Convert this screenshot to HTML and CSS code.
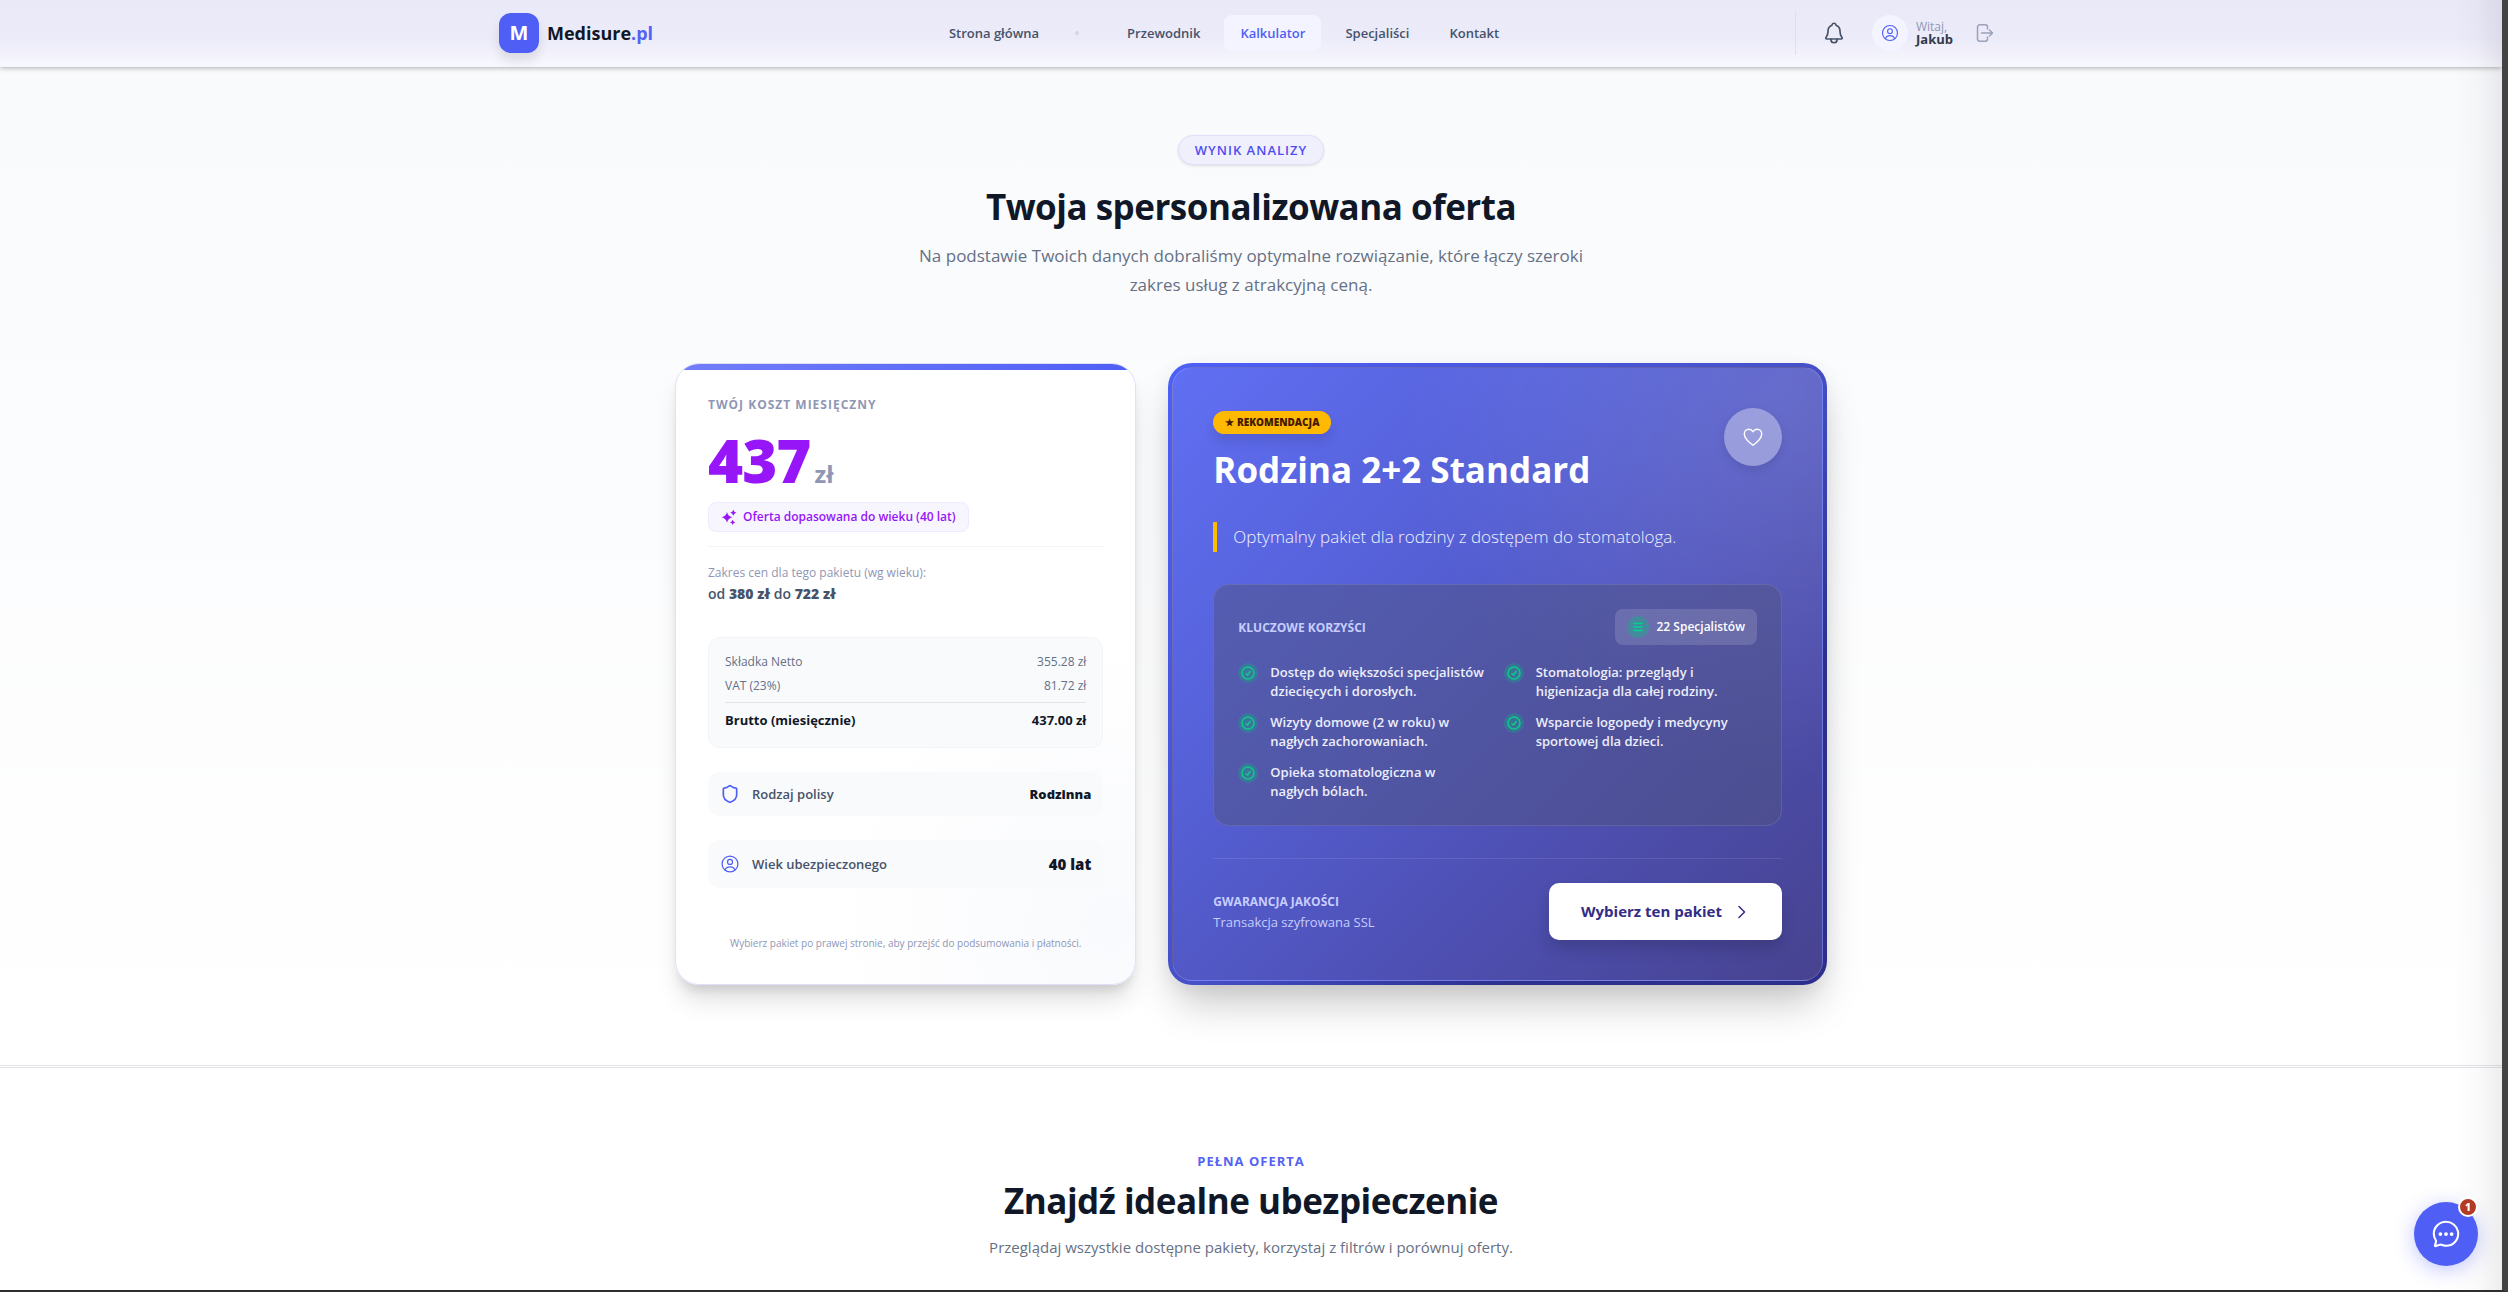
FILE: index.html
```html
<!DOCTYPE html>
<html lang="pl">
<head>
    <meta charset="UTF-8">
    <meta name="viewport" content="width=device-width, initial-scale=1.0">
    <title>Medisure.pl - Kalkulator</title>
    <link rel="stylesheet" href="styles.css">
</head>
<body>
    <header class="header">
        <div class="header-inner">
            <a href="#" class="logo">
                <span class="logo-mark">M</span>
                <span class="logo-text">Medisure<span class="accent">.pl</span></span>
            </a>

            <nav class="nav">
                <a href="#" class="nav-link">Strona główna</a>
                <span class="nav-dot"></span>
                <a href="#" class="nav-link">Przewodnik</a>
                <a href="#" class="nav-link active">Kalkulator</a>
                <a href="#" class="nav-link">Specjaliści</a>
                <a href="#" class="nav-link">Kontakt</a>
            </nav>

            <div class="user-area">
                <button class="icon-btn bell" aria-label="Powiadomienia">
                    <svg viewBox="0 0 512 512" class="icon icon-24">
                        <path d="M427.68 351.43C402 320 383.87 304 383.87 217.35 383.87 138 343.35 109.73 310 96c-4.43-1.82-8.6-6-9.95-10.55C294.2 65.54 277.8 48 256 48s-38.21 17.55-44 37.47c-1.35 4.6-5.52 8.71-9.95 10.53-33.39 13.75-73.87 41.92-73.87 121.35C128.13 304 110 320 84.32 351.43 73.68 364.45 83 384 101.61 384h308.88c18.51 0 27.77-19.61 17.19-32.57z"/>
                        <path d="M320 384v16a64 64 0 01-128 0v-16"/>
                    </svg>
                </button>
                <a href="#" class="user">
                    <span class="avatar">
                        <svg viewBox="0 0 24 24" class="icon icon-18 thin">
                            <circle cx="12" cy="12" r="10"/>
                            <circle cx="12" cy="9.5" r="3.2"/>
                            <path d="M6 19.6c.6-2.6 3-4.1 6-4.1s5.4 1.5 6 4.1"/>
                        </svg>
                    </span>
                    <span class="user-text">
                        <span class="hello">Witaj,</span>
                        <strong>Jakub</strong>
                    </span>
                </a>
                <button class="icon-btn logout" aria-label="Wyloguj">
                    <svg viewBox="0 0 20 20" class="icon icon-20 thin">
                        <path d="M12.5 6V4a2.2 2.2 0 0 0-2.2-2.2H4.7A2.2 2.2 0 0 0 2.5 4v12a2.2 2.2 0 0 0 2.2 2.2h5.6a2.2 2.2 0 0 0 2.2-2.2v-2M14.5 7l3 3-3 3M6.5 10h11"/>
                    </svg>
                </button>
            </div>
        </div>
    </header>

    <main>
        <section class="result">
            <div class="intro">
                <span class="pill">WYNIK ANALIZY</span>
                <h1>Twoja spersonalizowana oferta</h1>
                <p>Na podstawie Twoich danych dobraliśmy optymalne rozwiązanie, które łączy szeroki zakres usług z atrakcyjną ceną.</p>
            </div>

            <div class="cards">
                <!-- Koszt -->
                <div class="cost-card">
                    <h2 class="cost-label">TWÓJ KOSZT MIESIĘCZNY</h2>
                    <div class="price"><span class="amount">437</span><span class="currency">zł</span></div>
                    <div class="age-badge">
                        <svg viewBox="0 0 24 24" class="sparkles">
                            <path d="M9 4.5q1.3 6.2 8 8-6.7 1.8-8 8-1.3-6.2-8-8 6.7-1.8 8-8zM18.5 1q.9 3.6 4.5 4.5-3.6.9-4.5 4.5-.9-3.6-4.5-4.5 3.6-.9 4.5-4.5zM17.5 16q.7 3.3 4 4-3.3.7-4 4-.7-3.3-4-4 3.3-.7 4-4z"/>
                        </svg>
                        Oferta dopasowana do wieku (40 lat)
                    </div>
                    <div class="range">
                        <p class="range-label">Zakres cen dla tego pakietu (wg wieku):</p>
                        <p class="range-value">od <strong>380 zł</strong> do <strong>722 zł</strong></p>
                    </div>
                    <dl class="breakdown">
                        <div><dt>Składka Netto</dt><dd>355.28 zł</dd></div>
                        <div><dt>VAT (23%)</dt><dd>81.72 zł</dd></div>
                        <div class="total"><dt>Brutto (miesięcznie)</dt><dd>437.00 zł</dd></div>
                    </dl>
                    <div class="detail">
                        <svg viewBox="0 0 24 24" class="icon icon-20">
                            <path d="M20 13c0 5-3.5 7.5-7.66 8.95a1 1 0 0 1-.67-.01C7.5 20.5 4 18 4 13V6a1 1 0 0 1 1-1c2 0 4.5-1.2 6.24-2.72a1.17 1.17 0 0 1 1.52 0C14.51 3.81 17 5 19 5a1 1 0 0 1 1 1z"/>
                        </svg>
                        <span>Rodzaj polisy</span>
                        <strong>Rodzinna</strong>
                    </div>
                    <div class="detail age">
                        <svg viewBox="0 0 24 24" class="icon icon-20 thin">
                            <circle cx="12" cy="12" r="9.5"/>
                            <circle cx="12" cy="9.5" r="3"/>
                            <path d="M6.2 19.3c.6-2.5 3-3.8 5.8-3.8s5.2 1.3 5.8 3.8"/>
                        </svg>
                        <span>Wiek ubezpieczonego</span>
                        <strong>40 lat</strong>
                    </div>
                    <p class="note">Wybierz pakiet po prawej stronie, aby przejść do podsumowania i płatności.</p>
                </div>

                <!-- Rekomendacja -->
                <div class="offer-card">
                    <div class="offer-inner">
                        <div class="offer-head">
                            <div>
                                <span class="recommend">★ REKOMENDACJA</span>
                                <h2>Rodzina 2+2 Standard</h2>
                            </div>
                            <button class="heart" aria-label="Dodaj do ulubionych">
                                <svg viewBox="0 0 24 24" class="icon icon-22 thin">
                                    <path d="M12 21C7 17.5 2.5 13.5 2.5 8.8 2.5 5.7 4.8 3.5 7.5 3.5c1.9 0 3.5 1 4.5 2.8 1-1.8 2.6-2.8 4.5-2.8 2.7 0 5 2.2 5 5.3C21.5 13.5 17 17.5 12 21z"/>
                                </svg>
                            </button>
                        </div>
                        <p class="quote">Optymalny pakiet dla rodziny z dostępem do stomatologa.</p>

                        <div class="benefits">
                            <div class="benefits-head">
                                <h3>KLUCZOWE KORZYŚCI</h3>
                                <span class="specialists">
                                    <span class="list-icon">
                                        <svg viewBox="0 0 10 10" class="icon icon-10 thin"><path d="M1 1.5h8M1 5h8M1 8.5h8"/></svg>
                                    </span>
                                    22 Specjalistów
                                </span>
                            </div>
                            <ul>
                                <li>
                                    <svg viewBox="0 0 20 20" class="check"><circle class="halo" cx="10" cy="10" r="10"/><circle cx="10" cy="10" r="6"/><path d="M7.5 10.5l2 1.5 3-4"/></svg>
                                    Dostęp do większości specjalistów dziecięcych i dorosłych.
                                </li>
                                <li>
                                    <svg viewBox="0 0 20 20" class="check"><circle class="halo" cx="10" cy="10" r="10"/><circle cx="10" cy="10" r="6"/><path d="M7.5 10.5l2 1.5 3-4"/></svg>
                                    Stomatologia: przeglądy i higienizacja dla całej rodziny.
                                </li>
                                <li>
                                    <svg viewBox="0 0 20 20" class="check"><circle class="halo" cx="10" cy="10" r="10"/><circle cx="10" cy="10" r="6"/><path d="M7.5 10.5l2 1.5 3-4"/></svg>
                                    Wizyty domowe (2 w roku) w nagłych zachorowaniach.
                                </li>
                                <li>
                                    <svg viewBox="0 0 20 20" class="check"><circle class="halo" cx="10" cy="10" r="10"/><circle cx="10" cy="10" r="6"/><path d="M7.5 10.5l2 1.5 3-4"/></svg>
                                    Wsparcie logopedy i medycyny sportowej dla dzieci.
                                </li>
                                <li>
                                    <svg viewBox="0 0 20 20" class="check"><circle class="halo" cx="10" cy="10" r="10"/><circle cx="10" cy="10" r="6"/><path d="M7.5 10.5l2 1.5 3-4"/></svg>
                                    <span>Opieka stomatologiczna w<br>nagłych bólach.</span>
                                </li>
                            </ul>
                        </div>

                        <div class="offer-footer">
                            <p><strong>GWARANCJA JAKOŚCI</strong><br>Transakcja szyfrowana SSL</p>
                            <button class="choose">
                                Wybierz ten pakiet
                                <svg viewBox="0 0 16 16" class="icon icon-16 thin"><path d="M5 2.5l5.5 5.5L5 13.5"/></svg>
                            </button>
                        </div>
                    </div>
                </div>
            </div>
        </section>

        <section class="catalog">
            <span class="eyebrow">PEŁNA OFERTA</span>
            <h2>Znajdź idealne ubezpieczenie</h2>
            <p>Przeglądaj wszystkie dostępne pakiety, korzystaj z filtrów i porównuj oferty.</p>
        </section>
    </main>

    <div class="edge-shade"></div>

    <button class="chat" aria-label="Czat">
        <svg viewBox="0 0 512 512" class="icon icon-30">
            <path d="M87.48 380c1.2-4.38-1.43-10.47-3.94-14.86a42.63 42.63 0 00-2.54-3.8 199.81 199.81 0 01-33-110C47.64 139.09 140.72 48 255.82 48 356.2 48 440 117.54 459.57 209.85a199 199 0 014.43 41.64c0 112.41-89.49 204.93-204.59 204.93-18.31 0-43-4.6-56.47-8.37s-26.92-8.77-30.39-10.11a31.14 31.14 0 00-11.13-2.07 30.7 30.7 0 00-12.08 2.43L81.5 462.78a15.92 15.92 0 01-4.66 1.22 9.61 9.61 0 01-9.58-9.74 15.85 15.85 0 01.6-3.29z"/>
            <g class="dots"><circle cx="160" cy="256" r="32"/><circle cx="256" cy="256" r="32"/><circle cx="352" cy="256" r="32"/></g>
        </svg>
        <span class="chat-count">1</span>
    </button>
</body>
</html>
```

FILE: styles.css
```css
* {
    box-sizing: border-box;
    margin: 0;
    padding: 0;
}

body {
    height: 100vh;
    overflow: hidden;
    display: flex;
    flex-direction: column;
    border-right: 6px solid #434343;
    border-bottom: 2px solid #2e2e2c;
    background: #fff;
    color: #101828;
    font-family: "Open Sans", "Noto Sans", sans-serif;
    font-size: 14px;
}

a {
    color: inherit;
    text-decoration: none;
}

button {
    border: none;
    background: none;
    font-family: inherit;
    cursor: pointer;
}

.icon {
    fill: none;
    stroke: currentColor;
    stroke-width: 2;
    stroke-linecap: round;
    stroke-linejoin: round;
    flex-shrink: 0;
}

.icon[viewBox="0 0 512 512"] { stroke-width: 36; }
.icon.thin { stroke-width: 1.5; }
.icon-10 { width: 10px; height: 10px; }
.icon-16 { width: 16px; height: 16px; }
.icon-18 { width: 18px; height: 18px; }
.icon-20 { width: 20px; height: 20px; }
.icon-22 { width: 22px; height: 22px; }
.icon-24 { width: 24px; height: 24px; }
.icon-30 { width: 30px; height: 30px; }

/* Header */
.header {
    flex-shrink: 0;
    position: relative;
    z-index: 1;
    border-bottom: 1px solid #f4f4fb;
    background: linear-gradient(#eae9f8 0%, #ecebf9 60%, #f8f8fe 100%);
    box-shadow: 0 1px 5px rgba(0, 0, 0, 0.3);
}

.header-inner {
    max-width: 1536px;
    height: 66px;
    margin: 0 auto;
    padding: 0 16px;
    display: flex;
    justify-content: space-between;
    align-items: center;
}

.logo {
    display: flex;
    align-items: center;
    gap: 8px;
}

.logo-mark {
    width: 40px;
    height: 40px;
    border-radius: 12px;
    background: #4f5ff5;
    box-shadow: 0 8px 12px rgba(0, 0, 0, 0.1);
    color: #fff;
    font-size: 20px;
    font-weight: 700;
    line-height: 40px;
    text-align: center;
}

.logo-text {
    font-size: 18px;
    font-weight: 700;
}

.accent {
    color: #5462f5;
}

.nav {
    display: flex;
    align-items: center;
    gap: 8px;
}

.nav-link {
    padding: 8px 16px;
    border-radius: 8px;
    color: #46536a;
    font-size: 13px;
    font-weight: 600;
    line-height: 20px;
}

.nav-link.active {
    background: #f3f4ff;
    color: #4f5ff5;
}

.nav-dot {
    width: 4px;
    height: 4px;
    margin: 0 24px 0 12px;
    border-radius: 50%;
    background: #d5d6e2;
}

.user-area {
    height: 44px;
    padding-left: 20px;
    border-left: 1px solid #dfe0ea;
    display: flex;
    align-items: center;
}

.icon-btn {
    display: flex;
    color: #46536a;
}

.bell {
    padding: 6px;
    margin-right: 20px;
}

.logout {
    padding: 8px;
    margin-left: 14px;
    color: #9aa1b8;
}

.user {
    display: flex;
    align-items: center;
    gap: 8px;
}

.avatar {
    width: 36px;
    height: 36px;
    border-radius: 50%;
    background: #f3f4ff;
    color: #4f5ff5;
    display: flex;
    align-items: center;
    justify-content: center;
}

.user-text {
    display: flex;
    flex-direction: column;
    font-size: 13px;
    line-height: 12px;
    color: #323a49;
}

.hello {
    color: #8f97b5;
    font-size: 12px;
}

/* Wynik analizy */
.result {
    padding: 68px 0 80px;
    background: linear-gradient(#f9fafc, #fff);
    border-bottom: 1px solid #e3e4e7;
}

.intro {
    max-width: 704px;
    margin: 0 auto 64px;
    padding: 0 16px;
    text-align: center;
}

.pill {
    display: inline-block;
    padding: 0 16px;
    border: 1px solid #dfe0fc;
    border-radius: 15px;
    background: #f0f0fd;
    box-shadow: 0 1px 3px rgba(0, 0, 0, 0.12);
    color: #4f4df0;
    font-size: 13px;
    font-weight: 600;
    letter-spacing: 1px;
    line-height: 28px;
}

h1,
.catalog h2,
.offer-head h2 {
    font-size: 35px;
    font-weight: 700;
    line-height: 44px;
}

h1,
.catalog h2 {
    letter-spacing: -0.5px;
}

h1 {
    margin: 20px 0 12px;
}

.intro p {
    color: #667085;
    font-size: 17px;
    line-height: 29px;
}

.cards {
    max-width: 1152px;
    margin: 0 auto;
    display: grid;
    grid-template-columns: repeat(12, 1fr);
    gap: 32px;
}

.cost-card {
    grid-column: span 5;
    position: relative;
    overflow: hidden;
    padding: 32px;
    border: 1px solid #dfe1fb;
    border-radius: 24px;
    background: radial-gradient(circle at 95% 90%, #f9fafd 0%, #fff 40%);
    box-shadow: 0 20px 25px -5px rgba(0, 0, 0, 0.12), 0 8px 12px -4px rgba(0, 0, 0, 0.12);
}

.cost-card::before {
    content: "";
    position: absolute;
    top: 0;
    left: 0;
    right: 0;
    height: 6px;
    background: linear-gradient(90deg, #727ef8, #4f5ff5);
}

.cost-label {
    color: #8f97b5;
    font-size: 12px;
    font-weight: 700;
    letter-spacing: 1px;
    line-height: 18px;
}

.price {
    display: flex;
    align-items: baseline;
    gap: 4px;
    margin-top: 16px;
    line-height: 60px;
}

.amount {
    color: #9716f7;
    font-size: 60px;
    font-weight: 800;
    letter-spacing: -1px;
}

.currency {
    color: #8f97b5;
    font-size: 24px;
    font-weight: 700;
    line-height: 24px;
}

.age-badge {
    display: inline-flex;
    align-items: center;
    gap: 6px;
    margin-top: 12px;
    padding: 0 12px;
    border: 1px solid #efeafd;
    border-radius: 8px;
    background: #f7f5fe;
    color: #9716f7;
    font-size: 12px;
    font-weight: 600;
    line-height: 28px;
}

.sparkles {
    width: 16px;
    height: 16px;
    fill: currentColor;
}

.range {
    margin: 14px 0 32px;
    padding-top: 16px;
    border-top: 1px solid #f1f3f7;
}

.range-label {
    color: #8f97b5;
    font-size: 12px;
    line-height: 20px;
}

.range-value {
    color: #46536a;
    font-size: 14px;
    font-weight: 600;
    line-height: 22px;
}

.breakdown {
    padding: 12px 16px;
    border: 1px solid #f2f4f7;
    border-radius: 12px;
    background: #f9fafc;
    color: #667085;
    font-size: 12px;
}

.breakdown div {
    display: flex;
    justify-content: space-between;
    line-height: 24px;
}

.breakdown .total {
    margin-top: 4px;
    padding: 4px 0 2px;
    border-top: 1px solid #e1e4ea;
    color: #101828;
    font-size: 13px;
    font-weight: 700;
    line-height: 26px;
}

.detail {
    display: flex;
    align-items: center;
    gap: 12px;
    margin-top: 24px;
    padding: 12px;
    border-radius: 12px;
    background: #f9fafc;
    color: #46536a;
    font-weight: 600;
    font-size: 13px;
    line-height: 20px;
}

.detail .icon {
    color: #4f5ff5;
}

.detail strong {
    margin-left: auto;
    color: #101828;
}

.detail.age {
    line-height: 24px;
}

.detail.age strong {
    font-size: 15px;
}

.note {
    margin-top: 48px;
    color: #8f97b5;
    font-size: 10px;
    line-height: 14px;
    text-align: center;
}

.offer-card {
    grid-column: span 7;
    padding: 4px;
    border-radius: 24px;
    background: linear-gradient(135deg, #4c5ff8 0%, #4650c8 50%, #2c2f8c 75%);
    box-shadow: 0 25px 40px -8px rgba(0, 0, 0, 0.22), 0 4px 20px rgba(0, 0, 0, 0.06);
}

.offer-inner {
    height: 100%;
    padding: 40px;
    border: 1px solid rgba(255, 255, 255, 0.14);
    border-radius: 20px;
    background:
        radial-gradient(circle at 95% 5%, rgba(255, 255, 255, 0.12), transparent 45%),
        linear-gradient(135deg, #606ff3 0%, #5560d6 35%, #4e50b4 65%, #474390 100%);
    color: #fff;
    display: flex;
    flex-direction: column;
}

.offer-head {
    display: flex;
    justify-content: space-between;
    align-items: flex-start;
}

.recommend {
    display: inline-block;
    margin-top: 3px;
    padding: 0 12px;
    border-radius: 12px;
    background: #ffb900;
    box-shadow: 0 8px 12px rgba(0, 0, 0, 0.1);
    color: #461901;
    font-size: 10px;
    font-weight: 800;
    line-height: 23px;
}

.offer-head h2 {
    margin-top: 14px;
}

.heart {
    width: 58px;
    height: 58px;
    border-radius: 50%;
    background: rgba(255, 255, 255, 0.35);
    box-shadow: 0 4px 10px rgba(0, 0, 0, 0.1);
    color: #fff;
    display: flex;
    align-items: center;
    justify-content: center;
}

.quote {
    margin: 30px 0 32px;
    padding-left: 16px;
    border-left: 4px solid #ffb900;
    color: #f0f2ff;
    font-size: 17px;
    font-weight: 300;
    line-height: 30px;
}

.benefits {
    padding: 24px;
    border: 1px solid rgba(255, 255, 255, 0.1);
    border-radius: 16px;
    background: rgba(80, 84, 130, 0.5);
}

.benefits-head {
    display: flex;
    justify-content: space-between;
    align-items: center;
    margin-bottom: 18px;
}

.benefits-head h3 {
    color: #c6ceff;
    font-size: 12px;
    font-weight: 700;
}

.specialists {
    display: flex;
    align-items: center;
    gap: 8px;
    padding: 0 12px;
    border-radius: 8px;
    background: rgba(255, 255, 255, 0.14);
    font-size: 12px;
    font-weight: 600;
    line-height: 36px;
}

.list-icon {
    width: 22px;
    height: 22px;
    border-radius: 50%;
    background: rgba(0, 188, 125, 0.35);
    color: #00d492;
    display: flex;
    align-items: center;
    justify-content: center;
}

.benefits ul {
    display: grid;
    grid-template-columns: 1fr 1fr;
    gap: 12px;
    list-style: none;
}

.benefits li {
    display: flex;
    gap: 12px;
    color: #eceefb;
    font-size: 13px;
    font-weight: 600;
    line-height: 19px;
}

.check {
    width: 20px;
    height: 20px;
    flex-shrink: 0;
    fill: none;
    stroke: #10c98a;
    stroke-width: 1.5;
}

.check .halo {
    fill: rgba(0, 188, 125, 0.3);
    stroke: none;
}

.offer-footer {
    margin-top: 32px;
    padding-top: 24px;
    border-top: 1px solid rgba(255, 255, 255, 0.1);
    display: flex;
    justify-content: space-between;
    align-items: center;
    color: #c6ceff;
    font-size: 13px;
    line-height: 20px;
}

.offer-footer strong {
    font-size: 12px;
}

.choose {
    display: flex;
    align-items: center;
    gap: 12px;
    padding: 0 32px;
    border-radius: 10px;
    background: #fff;
    box-shadow: 0 10px 15px rgba(0, 0, 0, 0.14);
    color: #312c85;
    font-size: 15px;
    font-weight: 700;
    line-height: 57px;
}

/* Pełna oferta */
.catalog {
    margin-top: 1px;
    padding-top: 83px;
    border-top: 1px solid #e3e4e7;
    text-align: center;
}

.eyebrow {
    color: #5462f5;
    font-size: 13px;
    font-weight: 700;
    letter-spacing: 1px;
    line-height: 20px;
}

.catalog h2 {
    margin: 8px 0 12px;
}

.catalog p {
    color: #667085;
    font-size: 15px;
    line-height: 24px;
}

.edge-shade {
    position: fixed;
    top: 0;
    right: 6px;
    bottom: 2px;
    width: 48px;
    z-index: 2;
    background: linear-gradient(90deg, rgba(0, 0, 20, 0), rgba(0, 0, 20, 0.02) 50%, rgba(0, 0, 20, 0.07));
    pointer-events: none;
}

/* Czat */
.chat {
    position: fixed;
    right: 30px;
    bottom: 26px;
    z-index: 3;
    width: 64px;
    height: 64px;
    border-radius: 50%;
    background: #4f5ff5;
    box-shadow: 0 4px 20px rgba(79, 95, 245, 0.35);
    color: #fff;
    display: flex;
    align-items: center;
    justify-content: center;
}

.chat .dots {
    fill: #fff;
    stroke: none;
}

.chat-count {
    position: absolute;
    top: -5px;
    right: 0;
    width: 20px;
    height: 20px;
    border: 2px solid #fff;
    border-radius: 50%;
    background: #b33a24;
    font-size: 10px;
    font-weight: 800;
    line-height: 16px;
}
```
